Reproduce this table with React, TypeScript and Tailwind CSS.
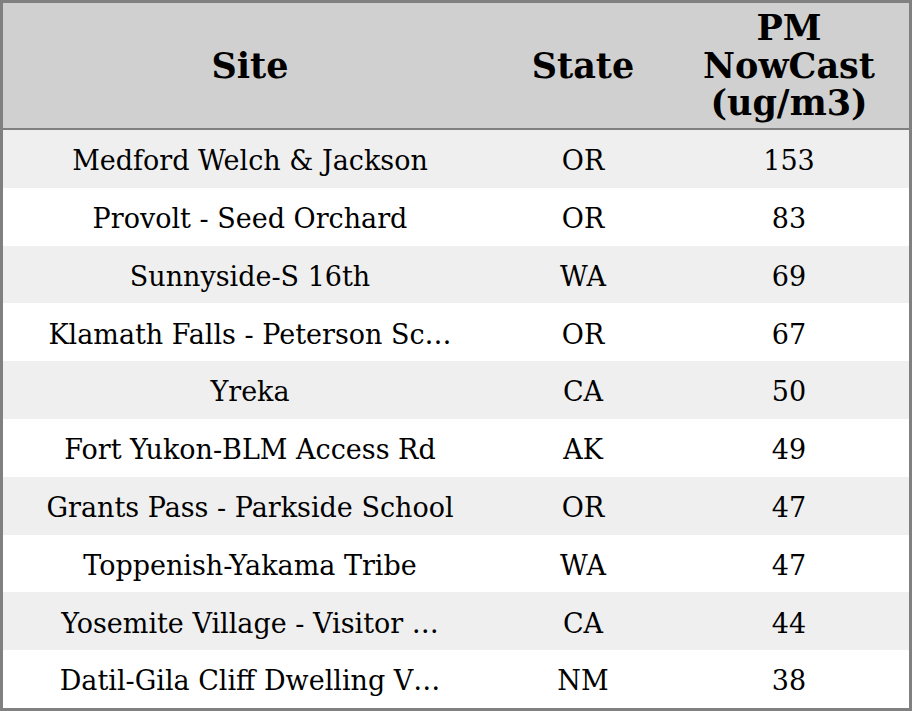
const rows = [
  { site: 'Medford Welch & Jackson', state: 'OR', pm: '153' },
  { site: 'Provolt - Seed Orchard', state: 'OR', pm: '83' },
  { site: 'Sunnyside-S 16th', state: 'WA', pm: '69' },
  { site: 'Klamath Falls - Peterson Sc…', state: 'OR', pm: '67' },
  { site: 'Yreka', state: 'CA', pm: '50' },
  { site: 'Fort Yukon-BLM Access Rd', state: 'AK', pm: '49' },
  { site: 'Grants Pass - Parkside School', state: 'OR', pm: '47' },
  { site: 'Toppenish-Yakama Tribe', state: 'WA', pm: '47' },
  { site: 'Yosemite Village - Visitor …', state: 'CA', pm: '44' },
  { site: 'Datil-Gila Cliff Dwelling V…', state: 'NM', pm: '38' },
]

export default function App() {
  return (
    <div className="w-[912px] h-[711px] border-[3px] border-[#808080] bg-white text-black font-['DejaVu_Serif',serif] overflow-hidden">
      {/* header */}
      <div className="grid grid-cols-[494px_172px_1fr] h-[127px] bg-[#d0d0d0] border-b-2 border-[#808080] text-[35px] font-bold leading-[37.5px]">
        <div className="flex items-center justify-center">Site</div>
        <div className="flex items-center justify-center">State</div>
        <div className="flex items-center justify-center text-center">
          PM
          <br />
          NowCast
          <br />
          (ug/m3)
        </div>
      </div>

      {/* rows */}
      {rows.map((r, i) => (
        <div
          key={i}
          className={`grid grid-cols-[494px_172px_1fr] h-[57.8px] items-center pt-[5px] text-[27px] ${i % 2 === 0 ? 'bg-[#efefef]' : 'bg-white'}`}
        >
          <div className="whitespace-nowrap text-center">{r.site}</div>
          <div className="text-center">{r.state}</div>
          <div className="text-center">{r.pm}</div>
        </div>
      ))}
    </div>
  )
}
